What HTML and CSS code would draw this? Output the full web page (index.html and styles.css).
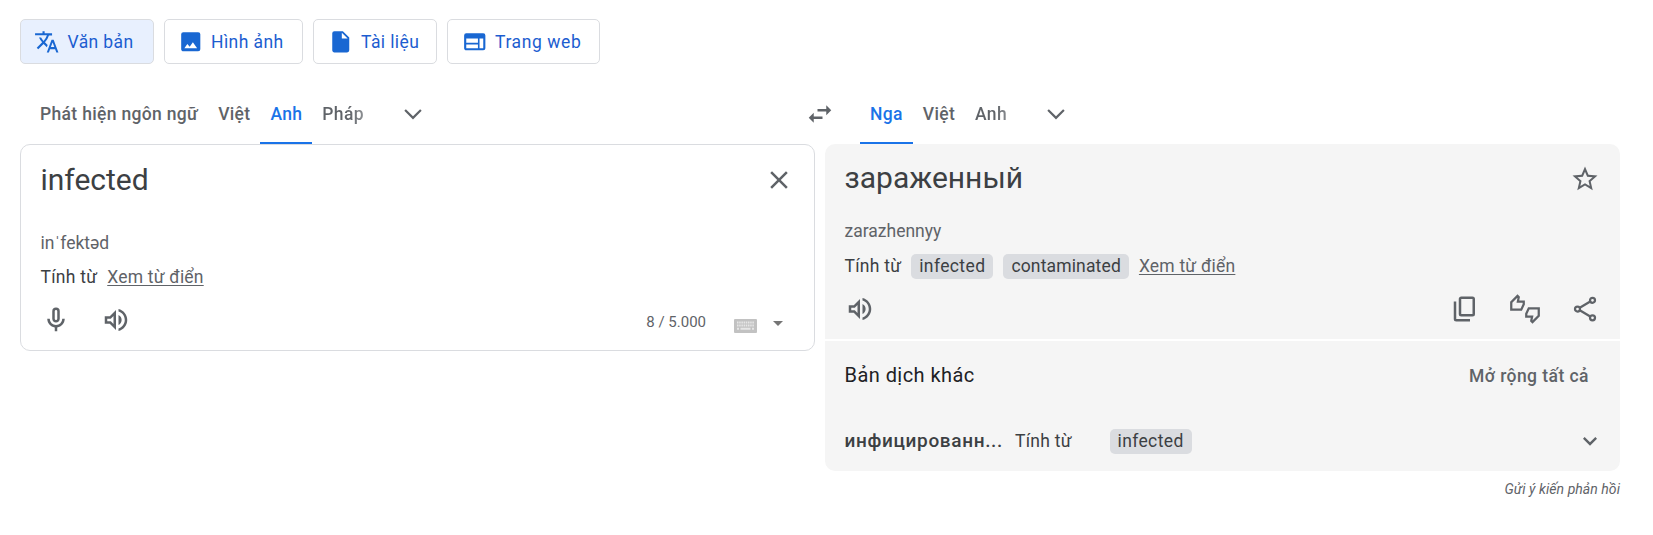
FILE: index.html
```html
<!DOCTYPE html>
<html lang="vi">
<head>
<meta charset="utf-8">
<title>Dịch</title>
<link rel="stylesheet" href="styles.css">
</head>
<body>
<nav class="modes">
  <button class="mode mode-text active"><svg class="mode-icon" viewBox="0 0 24 24"><path d="M12.87 15.07l-2.54-2.51.03-.03A17.52 17.52 0 0 0 14.07 6H17V4h-7V2H8v2H1v1.99h11.17C11.5 7.92 10.44 9.75 9 11.35 8.07 10.32 7.3 9.19 6.69 8h-2c.73 1.63 1.73 3.17 2.98 4.56l-5.09 5.02L4 19l5-5 3.11 3.11.76-2.04zM18.5 10h-2L12 22h2l1.12-3h4.75L21 22h2l-4.5-12zm-2.62 7l1.62-4.33L19.12 17h-3.24z"/></svg><span>Văn bản</span></button>
  <button class="mode mode-image"><svg class="mode-icon" viewBox="0 0 24 24"><path d="M19 3H5a2 2 0 0 0-2 2v14c0 1.100.9 2 2 2h14a2 2 0 0 0 2-2V5a2 2 0 0 0-2-2zM6 18l2.800-4 2.200 2.800L14 12.500 18 18z"/></svg><span>Hình ảnh</span></button>
  <button class="mode mode-doc"><svg class="mode-icon" viewBox="0 0 24 24"><path d="M6 2a2 2 0 0 0-2 2v16c0 1.100.9 2 2 2h12a2 2 0 0 0 2-2V8l-6-6H6zm7 7V3.500L18.500 9H13z"/></svg><span>Tài liệu</span></button>
  <button class="mode mode-web"><svg class="mode-icon" viewBox="0 0 24 24"><path d="M20 4H4a2 2 0 0 0-2 2v12c0 1.100.9 2 2 2h16a2 2 0 0 0 2-2V6a2 2 0 0 0-2-2zm-5 14H4v-3.500h11V18zm0-5H4V9h11v4zm5 5h-3.500V9H20v9z"/></svg><span>Trang web</span></button>
</nav>

<main class="translator">
  <div class="languages">
    <div class="tabs tabs-source">
      <span class="tab">Phát hiện ngôn ngữ</span><span class="tab">Việt</span><span class="tab selected">Anh</span><span class="tab fading">Pháp</span>
      <svg class="icon tab-more" viewBox="0 0 24 24"><path d="M5.410 7.590 4 9l8 8 8-8-1.410-1.410L12 14.170z"/></svg>
    </div>
    <svg class="icon" viewBox="0 0 24 24"><path d="M6.990 11 3 15l3.990 4v-3H14v-2H6.990v-3zM21 9l-3.990-4v3H10v2h7.010v3L21 9z"/></svg>
    <div class="tabs tabs-target">
      <span class="tab selected">Nga</span><span class="tab">Việt</span><span class="tab fading">Anh</span>
      <svg class="icon tab-more" viewBox="0 0 24 24"><path d="M5.410 7.590 4 9l8 8 8-8-1.410-1.410L12 14.170z"/></svg>
    </div>
  </div>

  <div class="panels">
    <section class="source">
      <div class="headline"><span class="phrase latin">infected</span>
        <svg class="icon" viewBox="0 0 24 24"><path d="M19 6.410 17.590 5 12 10.590 6.410 5 5 6.410 10.590 12 5 17.590 6.410 19 12 13.410 17.590 19 19 17.590 13.410 12z"/></svg>
      </div>
      <div class="phonetic">inˈfektəd</div>
      <div class="senses"><span class="pos">Tính từ</span><a class="dict">Xem từ điển</a></div>
      <div class="tools">
        <svg class="icon" viewBox="0 0 24 24"><path d="M12 14c1.660 0 3-1.340 3-3V5a3 3 0 0 0-6 0v6c0 1.660 1.340 3 3 3zm-1-9a1 1 0 0 1 2 0v6a1 1 0 0 1-2 0V5zm6 6a5 5 0 0 1-10 0H5c0 3.530 2.610 6.430 6 6.920V21h2v-3.080c3.390-.49 6-3.390 6-6.920h-2z"/></svg>
        <svg class="icon speaker" viewBox="0 0 24 24"><path d="M3 9v6h4l5 5V4L7 9H3zm7-.170v6.340L7.830 13H5v-2h2.830L10 8.830zM16.500 12A4.500 4.500 0 0 0 14 7.970v8.050c1.480-.73 2.500-2.250 2.500-4.020zM14 3.230v2.060c2.890.86 5 3.540 5 6.710s-2.110 5.850-5 6.710v2.060c4.010-.91 7-4.490 7-8.770s-2.990-7.860-7-8.770z"/></svg>
        <span class="counter">8 / 5.000</span>
        <svg class="keyboard" viewBox="0 0 23 14"><rect width="23" height="14" rx="1" fill="#c2c2c2"/><path d="M3 3.500h17M3 6.500h17" stroke="#e6e6e6" stroke-width="2" stroke-dasharray="1.500 .7"/><path d="M3 9.800h2M6.500 9.800h10M18 9.800h2" stroke="#e6e6e6" stroke-width="2"/></svg>
        <svg class="caret" viewBox="0 0 10 5"><path d="M0 0h10L5 5z"/></svg>
      </div>
    </section>

    <div class="target">
      <section class="result">
        <div class="headline"><span class="phrase cyrillic">зараженный</span>
          <svg class="icon star" viewBox="0 0 24 24"><path d="m22 9.240-7.190-.62L12 2 9.190 8.630 2 9.240l5.460 4.730L5.820 21 12 17.270 18.180 21l-1.630-7.030L22 9.240zM12 15.400l-3.760 2.270 1-4.280-3.320-2.880 4.380-.38L12 6.100l1.710 4.040 4.380.38-3.320 2.880 1 4.280L12 15.400z"/></svg>
        </div>
        <div class="phonetic">zarazhennyy</div>
        <div class="senses"><span class="pos">Tính từ</span><span class="chip">infected</span><span class="chip chip-long">contaminated</span><a class="dict">Xem từ điển</a></div>
        <div class="tools">
          <svg class="icon" viewBox="0 0 24 24"><path d="M3 9v6h4l5 5V4L7 9H3zm7-.170v6.340L7.830 13H5v-2h2.830L10 8.830zM16.500 12A4.500 4.500 0 0 0 14 7.970v8.050c1.480-.73 2.500-2.250 2.500-4.020zM14 3.230v2.060c2.890.86 5 3.540 5 6.710s-2.110 5.850-5 6.710v2.060c4.010-.91 7-4.490 7-8.770s-2.990-7.860-7-8.770z"/></svg>
          <div class="actions">
            <svg class="icon" viewBox="0 0 24 24"><path d="M9 18a2 2 0 0 1-2-2V4c0-1.100.9-2 2-2h9a2 2 0 0 1 2 2v12a2 2 0 0 1-2 2H9zm0-2h9V4H9v12zm-4 6a2 2 0 0 1-2-2V6h2v14h11v2H5z"/></svg>
            <svg class="icon" viewBox="0 0 24 24" fill="none"><path class="outline" d="M1 12.500V6.600L6 1.500l1 1L6.300 6H11v2.200l-2 4.300zM23 11.500v5.900l-5 5.100-1-1 .7-3.500H13v-2.200l2-4.300z"/></svg>
            <svg class="icon" viewBox="0 0 24 24"><g class="outline"><circle cx="18" cy="5" r="2"/><circle cx="6" cy="12" r="2"/><circle cx="18" cy="19" r="2"/><path d="M7.800 11 16.200 6M7.800 13l8.400 5"/></g></svg>
          </div>
        </div>
      </section>
      <section class="others">
        <div class="others-head"><h2>Bản dịch khác</h2><span class="expand">Mở rộng tất cả</span></div>
        <div class="other-row"><span class="word">инфицированн...</span><span class="pos">Tính từ</span><span class="chip">infected</span>
          <svg class="row-more" viewBox="0 0 24 24"><path d="M7.410 8.590 12 13.170l4.590-4.580L18 10l-6 6-6-6z"/></svg>
        </div>
      </section>
      <div class="feedback">Gửi ý kiến phản hồi</div>
    </div>
  </div>
</main>
</body>
</html>
```

FILE: styles.css
```css
* { box-sizing: border-box; }
body { margin: 0; padding: 19px 33px 0 20px; background: #fff; color: #3c4043; font-family: Roboto, "Liberation Sans", sans-serif; font-size: 17.5px; line-height: 24px; white-space: nowrap; }
svg { display: block; flex: none; fill: currentColor; }
.icon { width: 30px; height: 30px; color: #5f6368; }
.outline { fill: none; stroke: currentColor; stroke-width: 1.800; }

.modes { display: flex; gap: 10px; height: 45px; }
.mode { display: flex; align-items: center; gap: 8px; height: 45px; padding: 0 0 0 13px; border: 1px solid #dadce0; border-radius: 5px; background: #fff; color: #1c5dd0; font: 400 17.5px/24px Roboto, sans-serif; letter-spacing: .4px; }
.mode-icon { width: 25.500px; height: 25.500px; color: #1967d2; }
.mode.active { background: #e8f0fe; }
.mode-text { width: 134px; }
.mode-image { width: 139px; gap: 7.5px; }
.mode-doc { width: 124px; padding-left: 13.5px; }
.mode-web { width: 153px; padding-left: 13.5px; letter-spacing: .6px; }

.languages { display: flex; height: 80px; padding-top: 20px; align-items: center; }
.tabs { display: flex; align-items: center; height: 60px; }
.tabs-source { width: 785px; padding-left: 10px; }
.tabs-target { padding-left: 25px; }
.tab { height: 60px; padding: 0 10px; line-height: 60px; font-weight: 500; letter-spacing: .33px; color: #5f6368; border-bottom: 2px solid transparent; }
.tab.selected { color: #1a73e8; border-color: #1a73e8; }
.tab.fading { background: linear-gradient(90deg, #5f6368 60%, #b0b2b5 100%); background-clip: text; -webkit-background-clip: text; color: transparent; }
.tab-more { margin-left: 26.5px; width: 26px; height: 26px; }

.panels { display: flex; gap: 10px; align-items: flex-start; }
.source { width: 795px; height: 207px; padding: 15px 20px 0 19.5px; border: 1px solid #dadce0; border-radius: 10px; }
.headline { display: flex; justify-content: space-between; align-items: center; height: 40px; }
.phrase { font-size: 30px; }
.phonetic { height: 24px; color: #5f6368; }
.senses { display: flex; gap: 10px; align-items: flex-start; height: 25px; }
.pos { color: #3c4043; letter-spacing: .25px; }
.dict { color: #5f6368; letter-spacing: .2px; text-decoration: underline; text-underline-offset: 2px; }
.chip { height: 25px; padding: 0 8px; border-radius: 5px; background: #dadce0; letter-spacing: .38px; }
.chip-long { letter-spacing: .15px; }
.source .phonetic { margin-top: 31px; }
.source .senses { margin-top: 10px; }
.tools { display: flex; align-items: center; }
.source .tools { margin-top: 14px; height: 32px; }
.speaker { margin-left: 30px; }
.counter { margin: 4px 0 0 auto; font-size: 15px; color: #5f6368; }
.keyboard { width: 23px; height: 14px; margin: 12px 0 0 28px; }
.caret { width: 10px; height: 5px; margin: 6px 11px 0 16px; color: #757575; }

.target { width: 795px; }
.result { height: 195px; padding: 14px 20px 0 19.5px; border-radius: 10px 10px 0 0; background: #f5f5f5; }
.star { margin-top: 1px; }
.result .phonetic { margin-top: 21px; }
.result .senses { margin-top: 11px; }
.result .tools { justify-content: space-between; height: 30px; margin-top: 15px; }
.actions { display: flex; gap: 30px; }
.others { height: 130px; margin-top: 2px; padding: 20px 20px 0 19.5px; border-radius: 0 0 10px 10px; background: #f5f5f5; }
.others-head { display: flex; justify-content: space-between; align-items: center; height: 30px; padding-right: 11px; }
h2 { margin: 0 0 2px; color: #202124; font-size: 20px; font-weight: 400; letter-spacing: .45px; }
.expand { color: #5f6368; font-weight: 500; letter-spacing: .45px; }
.other-row { display: flex; align-items: flex-start; height: 25px; margin-top: 38px; }
.word { width: 170.5px; font-size: 19px; font-weight: 500; letter-spacing: .65px; }
.other-row .pos { width: 94.5px; }
.row-more { width: 28px; height: 28px; margin: -2px -4px 0 auto; color: #5f6368; }
.feedback { padding-top: 6px; color: #5f6368; font-size: 14px; font-style: italic; letter-spacing: .05px; text-align: right; }
```
